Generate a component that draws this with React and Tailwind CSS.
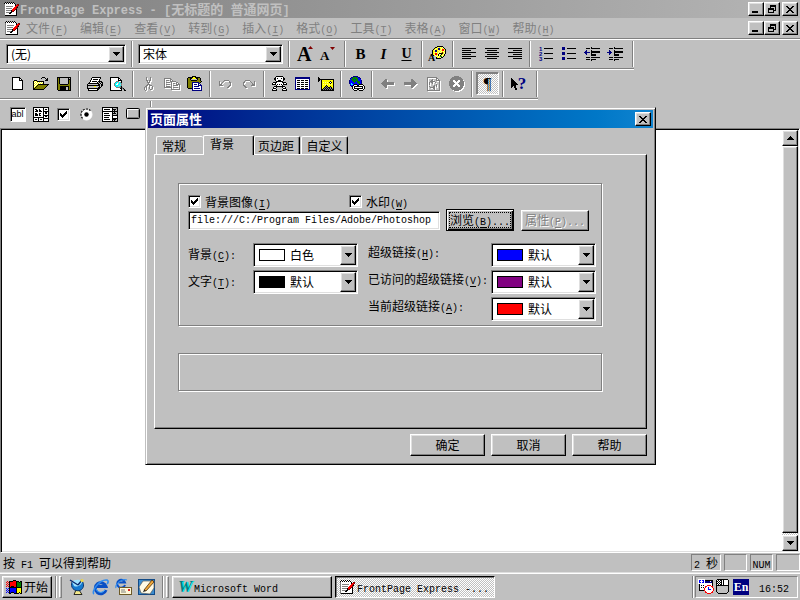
import { useState } from 'react';

const RAISED = 'border border-t-white border-l-white border-r-black border-b-black shadow-[inset_-1px_-1px_0_#808080,inset_1px_1px_0_#dfdfdf] bg-[#c0c0c0]';
const SUNKEN = 'border border-t-[#808080] border-l-[#808080] border-r-white border-b-white shadow-[inset_1px_1px_0_#000,inset_-1px_-1px_0_#dfdfdf] bg-white';
const ETCHED = 'border border-[#808080] shadow-[inset_1px_1px_0_#fff,1px_1px_0_#fff]';
const DITHER = 'bg-[repeating-conic-gradient(#fff_0_25%,#c0c0c0_0_50%)] bg-[length:2px_2px]';

const COLORS = {
  k: '#000000', w: '#ffffff', g: '#808080', l: '#c0c0c0', n: '#000080', b: '#0000ff', y: '#ffff00',
  o: '#808000', r: '#ff0000', d: '#800000', c: '#00ffff', t: '#008080', e: '#008000', p: '#ffff99',
};

const ICONS = {
  notepad: [
    '..k.k.k.k.k.....',
    '.kwkwkwkwkwk....',
    '.gwwwwwwwwwwk.dd',
    '.gwwwwwwwwwwkrrd',
    '.gwgggggggwwrrd.',
    '.gwwwwwwwwwrrdk.',
    '.gwggggggwrrrd..',
    '.gwwwwwwwrrrdk..',
    '.gwgggggkrrdwk..',
    '.gwwwwwwkddwwk..',
    '.gwggggkkwwwwk..',
    '.gwwwwkkwwwwwk..',
    '.gwwwwwwwwwwwk..',
    '.gkkkkkkkkkkkk..',
  ],
  close: ['kk....kk', '.kk..kk.', '..kkkk..', '...kk...', '..kkkk..', '.kk..kk.', 'kk....kk'],
  restore: ['..kkkkkk', '..kkkkkk', '..k....k', 'kkkkkk.k', 'kkkkkk.k', 'k....kkk', 'k....k..', 'kkkkkk..'],
  minimize: ['........', '........', '........', '........', '........', '........', 'kkkkkk..', 'kkkkkk..'],
  down: ['kkkkkkk', '.kkkkk.', '..kkk..', '...k...'],
  up: ['...k...', '..kkk..', '.kkkkk.', 'kkkkkkk'],
  check: ['......k', '.....kk', 'k...kkk', 'kk.kkk.', 'kkkkk..', '.kkk...', '..k....'],
  newDoc: [
    'kkkkkkkk...',
    'kwwwwwwkk..',
    'kwwwwwwkwk.',
    'kwwwwwwkkkk',
    'kwwwwwwwwwk',
    'kwwwwwwwwwk',
    'kwwwwwwwwwk',
    'kwwwwwwwwwk',
    'kwwwwwwwwwk',
    'kwwwwwwwwwk',
    'kwwwwwwwwwk',
    'kwwwwwwwwwk',
    'kkkkkkkkkkk',
  ],
  open: [
    '.........kkk....',
    '........k...k.k.',
    '.............kk.',
    '.kkk........kkk.',
    'kywykkkkkkk.....',
    'kwywywywywk.....',
    'kywywywywyk.....',
    'kwywykkkkkkkkkkk',
    'kywykoooooooook.',
    'kwykoooooooook..',
    'kykoooooooook...',
    'kkoooooooook....',
    'kkkkkkkkkkk.....',
  ],
  save: [
    'kkkkkkkkkkkkkk',
    'kokllllllllklk',
    'kokllllllllkkk',
    'kokllllllllkok',
    'kokllllllllkok',
    'kokllllllllkok',
    'kokllllllllkok',
    'kookkkkkkkkook',
    'kooooooooooook',
    'kookkkkkkkkkok',
    'kookkkkkkllkok',
    'kookkkkkkllkok',
    'kookkkkkkllkok',
    '.kkkkkkkkkkkkk',
  ],
  print: [
    '.....kkkkkkkkk..',
    '....kwwwwwwwwk..',
    '....kwkkkkkwk...',
    '...kwwwwwwwwk...',
    '...kwkkkkkwkkkk.',
    '..kwwwwwwwk.k.kk',
    '.kkkkkkkkkkk.klk',
    'kllllllllllkklkk',
    'kkkkkkkkkkkkklkk',
    'kllllllyylllklk.',
    'kllllllllllkkk..',
    'kkkkkkkkkkkkk...',
    '.kwwwwwwwwkk....',
    '.kkkkkkkkkk.....',
  ],
  preview: [
    'kkkkkkkkk.......',
    'kwwwwwwwkk......',
    'kwwwwwwwkwk.....',
    'kwwwwwwwkkkk....',
    'kwwwwwgggwwk....',
    'kwwwwgcclcgk....',
    'kwwwgccwlccg....',
    'kwwwgcwwcclg....',
    'kwwwgcccclcg....',
    'kwwwwgcclcgk....',
    'kwwwwwgggggkg...',
    'kwwwwwwwwwkkgk..',
    'kwwwwwwwwwwk.gk.',
    'kkkkkkkkkkkk..kk',
  ],
  cut: [
    '..g...g...',
    '..g...g...',
    '..g...g...',
    '..gg.gg...',
    '...g.g....',
    '...ggg....',
    '....g.....',
    '...ggg....',
    '..gg.ggg..',
    '.gg..g..g.',
    'g.g..g..g.',
    'g.g..g..g.',
    'g.g...gg..',
    '.g........',
  ],
  copy: [
    'ggggggg.........',
    'g.....gg........',
    'g.ggg.g.g.......',
    'g.....gggggg....',
    'g.gggg.g....gg..',
    'g......g.gg.g.g.',
    'g.gggg.g....gggg',
    'g......g.ggggg.g',
    'g.gggg.g.......g',
    'gggggggg.ggggg.g',
    '.......g.......g',
    '.......ggggggggg',
  ],
  paste: [
    '.....kkkk.......',
    '.kkkkkyykkkkk...',
    'kookkyyyykkook..',
    'kookllllllkook..',
    'koookkkkkkoook..',
    'koooooooooooook.',
    'koooonnnnnnnok..',
    'koooonwwwwwnn...',
    'koooonwnnnwnwn..',
    'koooonwwwwwnnnn.',
    'koooonwnnnnnwwn.',
    'koooonwwwwwwwwn.',
    '.kkkknwnnnnnnwn.',
    '.....nwwwwwwwwn.',
    '.....nnnnnnnnnn.',
  ],
  undo: [
    '.....ggggg...',
    'g...g.....g..',
    'g..g......gg.',
    'g.g........g.',
    'ggg........g.',
    'gggg......gg.',
    '.........gg..',
    '........gg...',
  ],
  redo: [
    '...ggggg.....',
    '..g.....g...g',
    '.gg......g..g',
    '.g........g.g',
    '.g........ggg',
    '.gg......gggg',
    '..gg.........',
    '...gg........',
  ],
  robot: [
    '....kkkkkkk....',
    '...kwwwwwwwk...',
    '..kkwkwwwkwkk..',
    '..kkwwwwwwwkk..',
    '...kwwkkkwwk...',
    '....kkkkkkk....',
    '.kkkkwwwwwkkkk.',
    'kwwkwwwwwwwkwwk',
    'kkkkwkwkwkwkkkk',
    '....kwwwwwk....',
    '..kkkkkkkkkkk..',
    '.kwwk.....kwwk.',
    '.kkk.......kkk.',
    'kwwwk.....kwwwk',
    'kkkkk.....kkkkk',
  ],
  table: [
    'nnnnnnnnnnnnnnn',
    'nnnnnnnnnnnnnnn',
    'nwwwwwwwwwwwwwn',
    'nwkkkwkkkwkkkwn',
    'nwwwwwwwwwwwwwn',
    'nwkkkwkkkwkkkwn',
    'nwwwwwwwwwwwwwn',
    'nwkkkwkkkwkkkwn',
    'nwwwwwwwwwwwwwn',
    'nwkkkwkkkwkkkwn',
    'nwwwwwwwwwwwwwn',
    'nwkkkwkkkwkkkwn',
    'nnnnnnnnnnnnnnn',
  ],
  picture: [
    'k...............',
    'kk..............',
    'kkkkkkkkkkkkkkkk',
    'kk.kyyyyyyyyyyyk',
    'k..kyyyyyyyykyyk',
    '...kypypypykwkyk',
    '...kyyyyyyyykyyk',
    '...kypypypypypyk',
    '...kyyyykyyyyyyk',
    '...kyyykgkyykyyk',
    '...kyykgkgkkgkyk',
    '...kykgkgkgkgkgk',
    '...kkgkgkgkgkgkk',
    '...kkkkkkkkkkkkk',
  ],
  globe: [
    '....nnnnn.......',
    '..nneeeebnn.....',
    '.nbeeeeeebbn....',
    '.beeebeeebbb....',
    'nbbeeeeeebbbn...',
    'nbbbeeebeeebn...',
    'nbbbbebbeeebn...',
    'nbcbbbbbbeebn...',
    '.bccbkkkbbkkkk..',
    '.nbbkwwwkkwwwwk.',
    '..nkwkkkkkkkkkwk',
    '...kwkwwwwwwwkwk',
    '...kwkkkkkkkkkwk',
    '....kwwwkkwwwwk.',
    '.....kkk..kkkk..',
  ],
  back: ['....gg.......', '...ggg.......', '..gggg.......', '.gggggggggggg', 'ggggggggggggg', '.gggggggggggg', '..gggg.......', '...ggg.......', '....gg.......'],
  forward: ['.......gg....', '.......ggg...', '.......gggg..', 'gggggggggggg.', 'ggggggggggggg', 'gggggggggggg.', '.......gggg..', '.......ggg...', '.......gg....'],
  refresh: [
    'gggggggggg...',
    'g........gg..',
    'g....g...g.g.',
    'g...gg...gggg',
    'g..ggggg....g',
    'g.g.gg..g...g',
    'g.g..g......g',
    'g.g......g..g',
    'g......g.g..g',
    'g.g...gg.g..g',
    'g..ggggg....g',
    'g.....gg....g',
    'g......g....g',
    'ggggggggggggg',
  ],
  stop: [
    '.....ggggg.....',
    '...ggggggggg...',
    '..ggggggggggg..',
    '.ggggggggggggg.',
    '.gggwwgggwwggg.',
    'ggggwwwgwwwgggg',
    'gggggwwwwwggggg',
    'ggggggwwwgggggg',
    'gggggwwwwwggggg',
    'ggggwwwgwwwgggg',
    '.gggwwgggwwggg.',
    '.ggggggggggggg.',
    '..ggggggggggg..',
    '...ggggggggg...',
    '.....ggggg.....',
  ],
  pointer: ['k......', 'kk.....', 'kkk....', 'kkkk...', 'kkkkk..', 'kkkkkk.', 'kkkkkkk', 'kkkkk..', 'kk.kk..', 'k..kk..', '....kk.', '....kk.'],
  alignLeft: ['kkkkkkkkkkkkkk', '', 'kkkkkkkkk.....', '', 'kkkkkkkkkkkkkk', '', 'kkkkkkkkk.....', '', 'kkkkkkkkkkkkkk', '', 'kkkkkkkkk.....'],
  alignCenter: ['kkkkkkkkkkkkkk', '', '..kkkkkkkkkk..', '', 'kkkkkkkkkkkkkk', '', '..kkkkkkkkkk..', '', 'kkkkkkkkkkkkkk', '', '..kkkkkkkkkk..'],
  alignRight: ['kkkkkkkkkkkkkk', '', '.....kkkkkkkkk', '', 'kkkkkkkkkkkkkk', '', '.....kkkkkkkkk', '', 'kkkkkkkkkkkkkk', '', '.....kkkkkkkkk'],
  bullets: ['nnn...........', 'nnn..kkkkkkkkk', 'nnn...........', '', '', 'nnn...........', 'nnn..kkkkkkkkk', 'nnn...........', '', '', 'nnn...........', 'nnn..kkkkkkkkk', 'nnn...........'],
  outdent: [
    '.......k........',
    '..kkkk.kkkkkkkkk',
    '................',
    '..n....k........',
    '.nn....kkkkkkkkk',
    'nnnnnn.kkkkkkkkk',
    '.nn....k........',
    '..n....kkkkk....',
    '.......kkkkk....',
    '................',
    '..kkkk.kkkkkkkkk',
    '................',
    '..kkkk.kkkkk....',
    '.......k........',
  ],
  indent: [
    '.......k........',
    '..kkkk.kkkkkkkkk',
    '................',
    '..n....k........',
    '..nn...kkkkkkkkk',
    'nnnnn..kkkkkkkkk',
    '..nn...k........',
    '..n....kkkkk....',
    '.......kkkkk....',
    '................',
    '..kkkk.kkkkkkkkk',
    '................',
    '..kkkk.kkkkk....',
    '.......k........',
  ],
  palette: [
    '.......kkkkkk...',
    '.....kkypypypk..',
    '....kypynnypypk.',
    '...kypyynnyprryk',
    '..kypnnypypyrrpk',
    '..kyynnyypypypyk',
    '..kypypypypydypk',
    '..kyyrrypkkkkypk',
    '..kyprrykppkypk.',
    '...kypypkpkypyk.',
    '......pypyeepk..',
    '......kypypkk...',
    '......kkkkk.....',
  ],
  textArea: [
    'kkkkkkkkkkkkkkkk',
    'kwwwwwwwwwkwwwwk',
    'kwkkwwkwwwkwkkwk',
    'kwwkkwkkwwkwwwwk',
    'kwkkkwkkkwkkkkkk',
    'kwwwwwwwwwkwkkwk',
    'kwkkwwkkwwkwkkwk',
    'kwkkkwkwwwkwwwwk',
    'kwkkkwkkwwkkkkkk',
    'kwwwwwwwwwkwkkwk',
    'kkkkkkkkkkkwwwwk',
    'kwwwwkwwwwkkkkkk',
    'kwkkwkwkkwkwwwwk',
    'kwwwwkwwwwkwwwwk',
    'kkkkkkkkkkkkkkkk',
  ],
  dropDown: [
    'kkkkkkkkkkkkkkkk',
    'kwwwwwwwwwklllgk',
    'kwkkkkkkwwkkkklk',
    'kwwwwwwwwwklkllk',
    'kkkkkkkkkkkkkkkk',
    'kwwwwwwwwwklkllk',
    'kwkkkkkwwwkkkklk',
    'kwwwwwwwwwklllgk',
    'kwkkkkkkwwkkkkkk',
    'kwwwwwwwwwkwwwwk',
    'kwkkkkkwwwkwwwwk',
    'kwwwwwwwwwkkkkkk',
    'kwkkkkkkwwkkkklk',
    'kwwwwwwwwwklkllk',
    'kkkkkkkkkkkkkkkk',
  ],
  windows: [
    '.......kkk......',
    '.r.kkkkrrrkkk.kk',
    'r.rkrrrrrrkeekek',
    '.r.krrrrrrkeeeek',
    'r.rkrrrrrrkeeeek',
    '.r.krrrrrrkeeeek',
    'r.rkrkkkrrkeeeek',
    '...kkkkkkkkkkkkk',
    'b.bkbbbbbbkyyyyk',
    '.b.kbbbbbbkyyyyk',
    'b.bkbbbbbbkyyyyk',
    '.b.kbbbbbbkyyyyk',
    'b.bkbkkkbbkyykyk',
    '...kk...kkkkk.kk',
  ],
  scheduler: [
    'wwwwwww.........',
    'wbbwbbwkkkkkkkk.',
    'wbwwwbwnnnnnwnk.',
    'wbbwbbwnnnnnnnk.',
    'wwwwwwwwwwwwwwk.',
    '.kwwwwwwwwwwwwk.',
    '.kwkwkwwwrrrrwk.',
    '.kwwwwwrrwwwwrr.',
    '.kwkwkwrwwbwwwr.',
    '.kwwwwrwwwbwwwwr',
    '.kwwwwrwwwbbbwwr',
    '.kkkkkrwwwwwwwwr',
    '.......rwwwwwwr.',
    '.......rrwwwwrr.',
    '.........rrrr...',
  ],
  mouse: [
    '.kkkkkkkkkkk.',
    'kwkwkkwkwwwwk',
    'kkwkwkwkwwwwk',
    'kwkwkkwkwwwwk',
    'kkwkwkwkwwwwk',
    'kwkwkkwkwwwwk',
    'kkkkkkkkkkkkk',
    'klllllllllllk',
    'klllllllllllk',
    'klllllllllllk',
    'klllllllllllk',
    'klllllllllllk',
    'klllllllllllk',
    '.klllllllllk.',
    '..kkkkkkkkk..',
  ],
};

const Bitmap = ({ name, className }) => {
  const rows = ICONS[name];
  const width = rows[0].length;
  return (
    <svg width={width} height={rows.length} viewBox={`0 0 ${width} ${rows.length}`} shapeRendering="crispEdges" className={`shrink-0 ${className || ''}`} aria-hidden="true">
      {rows.map((row, y) => [...row].map((char, x) => (
        COLORS[char] ? <rect key={`${x}-${y}`} x={x} y={y} width="1" height="1" fill={COLORS[char]} /> : null
      )))}
    </svg>
  );
};

// "&" marks the access key, latin runs are set half as wide as the chinese ones
const Txt = ({ children, bold }) => (
  <span className="whitespace-pre">
    {children.split(/([\x20-\x7e]+)/).map((part, i) => {
      if (i % 2 === 0) return part;
      const [before, after] = part.split('&');
      return (
        <span key={i} className={`leading-none font-["Liberation_Mono",monospace] ${bold ? 'text-[12px]' : 'text-[10px]'}`}>
          {before}
          {after && <><u className="underline-offset-2">{after[0]}</u>{after.slice(1)}</>}
        </span>
      );
    })}
  </span>
);

const WindowButton = ({ icon, label }) => (
  <button type="button" aria-label={label} className={`flex h-[14px] w-4 items-center justify-center ${RAISED}`}>
    <Bitmap name={icon} />
  </button>
);

const WindowButtons = () => (
  <div className="ml-auto flex pr-[2px]">
    <WindowButton icon="minimize" label="最小化" />
    <WindowButton icon="restore" label="还原" />
    <div className="ml-[2px]"><WindowButton icon="close" label="关闭" /></div>
  </div>
);

const MENUS = ['文件(&F)', '编辑(&E)', '查看(&V)', '转到(&G)', '插入(&I)', '格式(&O)', '工具(&T)', '表格(&A)', '窗口(&W)', '帮助(&H)'];

const MenuBar = () => (
  <nav className="flex h-[22px] items-center border-b border-white pb-px pl-1 text-[#808080] shadow-[inset_0_-1px_0_#808080]">
    <Bitmap name="notepad" />
    {MENUS.map((menu) => (
      <button type="button" key={menu} className="px-[6px]"><Txt>{menu}</Txt></button>
    ))}
    <WindowButtons />
  </nav>
);

const Combo = ({ label, value, className }) => (
  <div className={`relative h-5 ${SUNKEN} ${className}`}>
    <select aria-label={label} className="h-full w-full appearance-none pl-1 outline-none">
      <option>{value}</option>
    </select>
    <span className={`pointer-events-none absolute inset-y-px right-px flex w-4 items-center justify-center ${RAISED}`}>
      <Bitmap name="down" />
    </span>
  </div>
);

const Separator = () => <div className="mt-px w-[2px] border-l border-[#808080] bg-white" />;

const Group = ({ children, className = 'px-[3px]' }) => (
  <>
    <div className={`flex items-center ${className}`}>{children}</div>
    <Separator />
  </>
);

const Tool = ({ label, icon, disabled, children }) => (
  <button type="button" aria-label={label} disabled={disabled} className="flex h-[23px] w-[23px] items-center justify-center">
    {icon ? <Bitmap name={icon} className={disabled ? 'drop-shadow-[1px_1px_0_#fff]' : ''} /> : children}
  </button>
);

const Toolbar = ({ children }) => (
  <div className="flex h-[30px] self-start border-b border-white pb-[2px] pl-[3px] shadow-[inset_0_-1px_0_#808080]">{children}</div>
);

const FontSize = ({ size, baseline, arrow }) => (
  <svg width="18" height="22" viewBox="0 0 18 22" className="overflow-visible" aria-hidden="true">
    <text x="0" y={baseline} fontFamily="Liberation Serif, serif" fontWeight="bold" fontSize={size}>A</text>
    <path d={arrow} fill="#800000" />
  </svg>
);

const FormatToolbar = () => (
  <Toolbar>
    <Group className="pl-[3px] pr-[5px]"><Combo label="样式" value="(无)" className="w-[120px]" /></Group>
    <Group className="px-[5px]"><Combo label="字体" value="宋体" className="w-[145px]" /></Group>
    <Group className="px-1">
      <Tool label="增大字号"><FontSize size={20} baseline={18} arrow="M11 6h5l-2.5-3z" /></Tool>
      <Tool label="减小字号"><FontSize size={13} baseline={17} arrow="M10 4h5l-2.5 3z" /></Tool>
    </Group>
    <Group>
      <Tool label="粗体"><b className="font-['Liberation_Serif',serif] text-[15px]">B</b></Tool>
      <Tool label="斜体"><i className="font-['Liberation_Serif',serif] text-[15px] font-bold">I</i></Tool>
      <Tool label="下划线"><u className="font-['Liberation_Serif',serif] text-[14px] font-bold underline-offset-2">U</u></Tool>
    </Group>
    <Group>
      <Tool label="文字颜色">
        <span className="relative">
          <Bitmap name="palette" className="mb-[2px] ml-px" />
          <b className="absolute -bottom-[2px] -left-px font-['Liberation_Serif',serif] text-[10px] leading-none">A</b>
        </span>
      </Tool>
    </Group>
    <Group>
      <Tool label="左对齐" icon="alignLeft" />
      <Tool label="居中" icon="alignCenter" />
      <Tool label="右对齐" icon="alignRight" />
    </Group>
    <Group className="pl-[3px] pr-[6px]">
      <Tool label="编号列表">
        <svg width="16" height="15" viewBox="0 0 16 15" className="overflow-visible" aria-hidden="true">
          <g fontFamily="Liberation Sans, sans-serif" fontWeight="bold" fontSize="6" fill="#000080">
            <text x="1" y="5">1</text>
            <text x="1" y="10">2</text>
            <text x="1" y="15">3</text>
          </g>
          <path d="M6 2h9v1h-9zM6 7h9v1h-9zM6 12h9v1h-9z" />
        </svg>
      </Tool>
      <Tool label="项目符号列表" icon="bullets" />
      <Tool label="减少缩进" icon="outdent" />
      <Tool label="增加缩进" icon="indent" />
    </Group>
  </Toolbar>
);

const StandardToolbar = () => (
  <Toolbar>
    <Group>
      <Tool label="新建" icon="newDoc" />
      <Tool label="打开" icon="open" />
      <Tool label="保存" icon="save" />
    </Group>
    <Group>
      <Tool label="打印" icon="print" />
      <Tool label="打印预览" icon="preview" />
    </Group>
    <Group>
      <Tool label="剪切" icon="cut" disabled />
      <Tool label="复制" icon="copy" disabled />
      <Tool label="粘贴" icon="paste" />
    </Group>
    <Group>
      <Tool label="撤消" icon="undo" disabled />
      <Tool label="重做" icon="redo" disabled />
    </Group>
    <Group>
      <Tool label="插入组件" icon="robot" />
      <Tool label="插入表格" icon="table" />
      <Tool label="插入图像" icon="picture" />
    </Group>
    <Group><Tool label="超级链接" icon="globe" /></Group>
    <Group>
      <Tool label="后退" icon="back" disabled />
      <Tool label="前进" icon="forward" disabled />
      <Tool label="刷新" icon="refresh" disabled />
      <Tool label="停止" icon="stop" disabled />
    </Group>
    <Group>
      <button type="button" aria-label="显示段落标记" aria-pressed="true" className={`flex h-[23px] w-[23px] items-center justify-center border border-t-[#808080] border-l-[#808080] border-r-white border-b-white shadow-[inset_1px_1px_0_#808080] ${DITHER}`}>
        <span className="font-['Liberation_Serif',serif] text-[17px]">¶</span>
      </button>
    </Group>
    <Group className="pl-[3px] pr-[6px]">
      <Tool label="帮助">
        <Bitmap name="pointer" />
        <b className="font-['Liberation_Serif',serif] text-[17px] leading-none text-[#000080]">?</b>
      </Tool>
    </Group>
  </Toolbar>
);

const FormToolbar = () => (
  <div className="flex h-[28px] self-start pl-[3px]">
    <Group className="pl-[3px] pr-[6px]">
      <Tool label="单行文本框">
        <span className="h-[15px] w-4 border border-t-[#808080] border-l-[#808080] border-r-white border-b-white bg-white text-[9px] font-['Liberation_Sans',sans-serif] leading-[13px] shadow-[inset_1px_1px_0_#000]">abl</span>
      </Tool>
      <Tool label="滚动文本框" icon="textArea" />
      <Tool label="复选框">
        <span className={`flex h-[13px] w-[13px] items-center justify-center ${SUNKEN}`}><Bitmap name="check" /></span>
      </Tool>
      <Tool label="单选按钮">
        <svg width="13" height="13" viewBox="0 0 13 13" aria-hidden="true">
          <circle cx="6.5" cy="6.5" r="5.5" fill="#fff" stroke="#fff" />
          <path d="M2.6 10.4A5.5 5.5 0 0 1 10.4 2.6" fill="none" stroke="#000" strokeWidth="1.2" strokeDasharray="2 1" />
          <circle cx="6.5" cy="6.5" r="2.2" />
        </svg>
      </Tool>
      <Tool label="下拉菜单" icon="dropDown" />
      <Tool label="按钮">
        <svg width="14" height="12" viewBox="0 0 14 12" aria-hidden="true">
          <rect x="0.5" y="0.5" width="13" height="10" rx="1" fill="#c0c0c0" stroke="#000" />
          <path d="M1.5 9V1.5H12" fill="none" stroke="#fff" />
          <path d="M2 9.5H12.5V2" fill="none" stroke="#808080" />
        </svg>
      </Tool>
    </Group>
  </div>
);

const Editor = () => (
  <main className="flex flex-1 border border-t-[#808080] border-l-[#808080] border-r-white border-b-white bg-white p-px shadow-[inset_1px_1px_0_#000,inset_-1px_-1px_0_#dfdfdf]">
    <div className="flex-1" />
    <div className={`flex w-4 flex-col ${DITHER}`}>
      <button type="button" aria-label="向上滚动" className={`flex h-4 items-center justify-center ${RAISED}`}><Bitmap name="up" /></button>
      <div className={`mb-[2px] flex-1 ${RAISED}`} />
      <button type="button" aria-label="向下滚动" className={`flex h-4 items-center justify-center ${RAISED}`}><Bitmap name="down" /></button>
    </div>
  </main>
);

const Cell = ({ className, children }) => (
  <div className={`flex h-[17px] items-center justify-center border border-t-[#808080] border-l-[#808080] border-r-white border-b-white ${className}`}>{children}</div>
);

const StatusBar = () => (
  <footer className="flex h-[19px] items-center gap-[3px] pl-[3px]">
    <span className="mr-auto"><Txt>按 F1 可以得到帮助</Txt></span>
    <Cell className="w-[30px]"><Txt>2 秒</Txt></Cell>
    <Cell className="w-[23px]" />
    <Cell className="w-[23px]"><Txt>NUM</Txt></Cell>
    <Cell className="w-[24px]" />
  </footer>
);

const Grip = () => (
  <div className="flex h-[22px] gap-[2px]">
    <div className="w-[2px] border-l border-[#808080] bg-white" />
    <div className="w-[3px] border border-t-white border-l-white border-r-[#808080] border-b-[#808080]" />
  </div>
);

const TaskBar = () => (
  <footer className="flex h-7 items-center border-t border-[#dfdfdf] pl-[2px] pr-[2px] shadow-[inset_0_1px_0_#fff]">
    <button type="button" className={`mr-[3px] flex h-[22px] w-[50px] items-center gap-[2px] pl-[3px] ${RAISED}`}>
      <Bitmap name="windows" />
      <Txt>开始</Txt>
    </button>
    <Grip />
    <div className="flex gap-[6px] px-[7px]">
      <button type="button" aria-label="查看频道">
        <svg width="17" height="18" viewBox="0 0 17 18" aria-hidden="true">
          <path d="M7 12l-2 4.500h8l-3-4.500z" fill="#f5e98a" stroke="#000" strokeWidth="0.8" />
          <path d="M3 4C1 9 5 14 11 12.500C15 10.500 15.500 6 13 3z" fill="#1479d0" stroke="#10386c" />
          <path d="M3 4C5 1.500 10 1 13 3C14 6 8 10 5 8z" fill="#9fe4ff" />
          <path d="M1 2l8 5M13 2l-4 5" stroke="#082a70" strokeWidth="1.400" />
          <circle cx="13" cy="2.500" r="1.600" fill="#efd84a" />
        </svg>
      </button>
      <button type="button" aria-label="Internet Explorer">
        <svg width="17" height="18" viewBox="0 0 17 18" aria-hidden="true">
          <path d="M14 12A5.5 5.5 0 1 1 14 8.5H5" fill="none" stroke="#0a4fc4" strokeWidth="3" />
          <path d="M13 12A5 5 0 0 1 4 11" fill="none" stroke="#39a5ff" strokeWidth="1" />
          <path d="M2 16C-1 14 7 1 15 2C17 3 16 5 15 6" fill="none" stroke="#2f8cf0" strokeWidth="1.6" />
        </svg>
      </button>
      <button type="button" aria-label="Outlook Express">
        <svg width="17" height="18" viewBox="0 0 17 18" aria-hidden="true">
          <path d="M10 7A4 4 0 1 1 10 4.500H4" fill="none" stroke="#0a4fc4" strokeWidth="2" />
          <path d="M1 10C0 7 6 0 12 2" fill="none" stroke="#2f8cf0" strokeWidth="1.2" />
          <rect x="4.500" y="9.500" width="12" height="7" fill="#fff8d8" stroke="#6d5a28" />
          <path d="M6 12h4M6 14h5" stroke="#808080" />
          <rect x="13" y="11" width="2" height="2" fill="#e02020" />
        </svg>
      </button>
      <button type="button" aria-label="显示桌面">
        <svg width="17" height="18" viewBox="0 0 17 18" aria-hidden="true">
          <rect x="0.500" y="1.500" width="16" height="15" fill="#3b8ccf" stroke="#124a86" />
          <path d="M1 9L5 3L16 3L16 10L12 16L3 15z" fill="#fffbe6" stroke="#5a5a5a" strokeWidth="0.7" />
          <path d="M6 12L14 2L16 4L8 13z" fill="#f0a83a" stroke="#4a2c08" strokeWidth="0.8" />
          <path d="M6 12l-1 2l3-1z" fill="#000" />
        </svg>
      </button>
    </div>
    <Grip />
    <button type="button" className={`ml-[3px] flex h-[22px] w-40 items-center pl-[3px] ${RAISED}`}>
      <b className="w-[18px] font-['Liberation_Serif',serif] text-[16px] italic leading-none text-[#008080] [text-shadow:1px_0_0_#00ffff]">W</b>
      <Txt>Microsoft Word</Txt>
    </button>
    <button type="button" className={`ml-[3px] flex h-[22px] w-40 items-center gap-[2px] border border-t-black border-l-black border-r-white border-b-white pl-[3px] shadow-[inset_1px_1px_0_#808080] ${DITHER}`}>
      <Bitmap name="notepad" />
      <Txt>FrontPage Express -...</Txt>
    </button>
    <div className="ml-auto flex h-[22px] gap-[1px]">
      <div className="w-[2px] border-l border-[#808080] bg-white" />
      <div className="flex items-center gap-[2px] border border-t-[#808080] border-l-[#808080] border-r-white border-b-white pl-[2px] pr-[8px]">
        <Bitmap name="scheduler" />
        <Bitmap name="mouse" />
        <span className="ml-[2px] h-4 w-4 bg-[#000080] text-center font-['Liberation_Serif',serif] text-[12px] font-bold leading-4 text-white">En</span>
        <span className="ml-2"><Txt>16:52</Txt></span>
      </div>
    </div>
  </footer>
);

const ColorSelect = ({ id, label, value, swatch, labelClass }) => (
  <div className="flex h-6 items-center">
    <label htmlFor={id} className={labelClass}><Txt>{label}</Txt></label>
    <div className={`relative h-6 w-[105px] ${SUNKEN}`}>
      <select id={id} className="h-full w-full appearance-none pl-[36px] outline-none">
        <option>{value}</option>
      </select>
      <span className={`pointer-events-none absolute left-[5px] top-[5px] h-3 w-[26px] border border-black ${swatch}`} />
      <span className={`pointer-events-none absolute inset-y-px right-px flex w-4 items-center justify-center ${RAISED}`}>
        <Bitmap name="down" />
      </span>
    </div>
  </div>
);

const CheckBox = ({ id, label, className }) => {
  const [checked, setChecked] = useState(true);
  return (
    <div className={`flex items-center gap-1 ${className || ''}`}>
      <span className="relative flex">
        <input id={id} type="checkbox" checked={checked} onChange={() => setChecked(!checked)} className={`h-[13px] w-[13px] appearance-none ${SUNKEN}`} />
        {checked && <Bitmap name="check" className="pointer-events-none absolute left-[3px] top-[3px]" />}
      </span>
      <label htmlFor={id}><Txt>{label}</Txt></label>
    </div>
  );
};

const TAB = 'rounded-t-[2px] border border-b-0 border-t-white border-l-white border-r-black shadow-[inset_-1px_0_0_#808080]';

const PageProperties = () => {
  const [path, setPath] = useState('file:///C:/Program Files/Adobe/Photoshop');

  return (
    <div role="dialog" aria-label="页面属性" className="absolute left-[145px] top-[107px] w-[511px] border border-t-[#c0c0c0] border-l-[#c0c0c0] border-r-black border-b-black bg-[#c0c0c0] p-[2px] shadow-[inset_1px_1px_0_#fff,inset_-1px_-1px_0_#808080]">
      <div className="flex h-[18px] items-center bg-linear-to-r from-[#000080] to-[#1084d0] px-[2px] text-[13px] font-bold text-white">
        <Txt bold>页面属性</Txt>
        <div className="ml-auto"><WindowButton icon="close" label="关闭" /></div>
      </div>
      <div className="px-[6px] pb-[6px] pt-[7px]">
        <div role="tablist" className="relative -mb-px flex items-end pl-[2px]">
          <button type="button" role="tab" className={`mb-px h-[18px] w-[47px] border-r-0 pr-3 shadow-none ${TAB}`}>常规</button>
          <button type="button" role="tab" aria-selected="true" className={`flex h-[20px] w-[51px] justify-center bg-[#c0c0c0] pr-[13px] ${TAB}`}>背景</button>
          <button type="button" role="tab" className={`mb-px h-[18px] w-[46px] pr-[2px] ${TAB}`}>页边距</button>
          <button type="button" role="tab" className={`mb-px ml-px h-[18px] w-[47px] ${TAB}`}>自定义</button>
        </div>
        <div role="tabpanel" className="border border-t-white border-l-white border-r-black border-b-black pb-[37px] pl-[23px] pr-[44px] pt-[28px] shadow-[inset_-1px_-1px_0_#808080]">
          <div className={`pb-1 pl-[9px] pt-[10px] ${ETCHED}`}>
            <div className="flex h-[15px] items-center">
              <CheckBox id="bg-image" label="背景图像(&I)" className="w-[161px]" />
              <CheckBox id="watermark" label="水印(&W)" />
            </div>
            <div className="flex items-center">
              <input aria-label="背景图像" value={path} onChange={(e) => setPath(e.target.value)} className={`h-[19px] w-[252px] pl-[2px] font-["Liberation_Mono",monospace] text-[10px] outline-none ${SUNKEN}`} />
              <button type="button" className="ml-[6px] h-[22px] w-[68px] border border-black bg-[#c0c0c0] p-[2px] shadow-[inset_1px_1px_0_#fff,inset_-1px_-1px_0_#000,inset_-2px_-2px_0_#808080]">
                <span className="flex h-full items-center justify-center border border-dotted border-black"><Txt>浏览(&B)...</Txt></span>
              </button>
              <button type="button" disabled className={`ml-[7px] h-[21px] w-[68px] text-[#808080] [text-shadow:1px_1px_0_#fff] ${RAISED}`}><Txt>属性(&P)...</Txt></button>
            </div>
            <div className="mt-3 flex gap-[10px]">
              <div className="flex flex-col gap-[3px]">
                <ColorSelect id="background" label="背景(&C):" value="白色" swatch="bg-white" labelClass="w-[65px] pb-[2px]" />
                <ColorSelect id="text" label="文字(&T):" value="默认" swatch="bg-black" labelClass="w-[65px] pb-[2px]" />
              </div>
              <div className="flex flex-col gap-[3px]">
                <ColorSelect id="link" label="超级链接(&H):" value="默认" swatch="bg-[#0000ff]" labelClass="w-[123px] pb-[6px]" />
                <ColorSelect id="visited" label="已访问的超级链接(&V):" value="默认" swatch="bg-[#800080]" labelClass="w-[123px] pb-[6px]" />
                <ColorSelect id="active" label="当前超级链接(&A):" value="默认" swatch="bg-[#ff0000]" labelClass="w-[123px] pb-[6px]" />
              </div>
            </div>
          </div>
          <div className={`mt-[27px] h-[38px] ${ETCHED}`} />
        </div>
        <div className="mt-[5px] flex justify-end gap-[6px]">
          <button type="button" className={`h-[22px] w-[75px] ${RAISED}`}>确定</button>
          <button type="button" className={`h-[22px] w-[75px] ${RAISED}`}>取消</button>
          <button type="button" className={`h-[22px] w-[75px] ${RAISED}`}>帮助</button>
        </div>
      </div>
    </div>
  );
};

const App = () => (
  <div className="relative flex min-h-screen flex-col bg-[#c0c0c0] font-['Noto_Sans_CJK_SC',sans-serif] text-[12px] leading-4 text-black">
    <header className="flex h-[18px] items-center gap-px bg-linear-to-r from-[#808080] to-[#b5b5b5] pl-[3px] text-[13px] font-bold text-[#c0c0c0]">
      <Bitmap name="notepad" />
      <Txt bold>FrontPage Express - [无标题的 普通网页]</Txt>
      <WindowButtons />
    </header>
    <MenuBar />
    <FormatToolbar />
    <StandardToolbar />
    <FormToolbar />
    <Editor />
    <StatusBar />
    <TaskBar />
    <PageProperties />
  </div>
);

export default App;
